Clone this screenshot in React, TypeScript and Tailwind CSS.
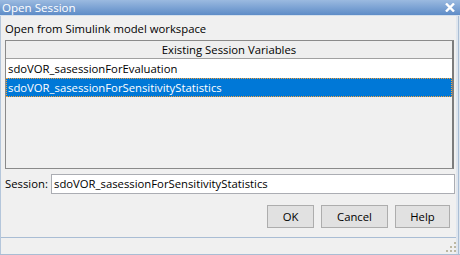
import React from "react";

const FONT = { fontFamily: '"Open Sans", "Noto Sans", sans-serif' };

function Grip() {
  const dots = [
    [8, 0],
    [4, 4],
    [8, 4],
    [0, 8],
    [4, 8],
    [8, 8],
  ];
  return (
    <svg width="10" height="10" viewBox="0 0 10 10">
      {dots.map(([x, y], i) => (
        <rect key={i} x={x} y={y} width="2" height="2" fill="#bdb8a3" />
      ))}
    </svg>
  );
}

export default function App() {
  return (
    <div
      className="w-[460px] h-[255px] bg-[#f0f0f0] flex flex-col text-[11.3px] text-black overflow-hidden"
      style={FONT}
    >
      {/* Title bar */}
      <div className="h-[15px] bg-gradient-to-b from-[#9bbae0] to-[#5e8cc7] flex items-center justify-between pl-[2px] pr-[5px]">
        <span className="text-white leading-[15px] text-[11.6px]">Open Session</span>
        <svg width="10" height="9" viewBox="0 0 10 9">
          <path d="M1 0.5 L9 8.5 M9 0.5 L1 8.5" stroke="white" strokeWidth="2.4" />
        </svg>
      </div>
      <div className="h-[1px] bg-[#d5e0ec]" />

      {/* Body */}
      <div className="flex-1 flex flex-col border-l border-l-[#b4c6db] border-r-[4px] border-r-[#dfe6ee] relative">
        <div className="absolute right-[-3px] top-0 bottom-0 w-[1px] bg-[#a9bdd4]" />
        <div className="h-[24px] pl-[4px] leading-[24px] pt-[1px]">Open from Simulink model workspace</div>

        {/* Table */}
        <div className="ml-[4px] mr-[2px] h-[129px] border border-[#8a8a8a] border-r-2 border-r-[#7c7c7c] bg-[#f0f0f0] flex flex-col">
          <div className="h-[18px] border-b border-[#a0a0a0] bg-[#eeeeee] flex items-center justify-center leading-[18px]">
            Existing Session Variables
          </div>
          <div className="h-[19px] bg-white pl-[2px] leading-[19px]">sdoVOR_sasessionForEvaluation</div>
          <div className="h-[19px] bg-[#0078d7] text-white pl-[1px] leading-[17px] border border-dotted border-[#f5a03a]">
            sdoVOR_sasessionForSensitivityStatistics
          </div>
        </div>

        {/* Session field */}
        <div className="mt-[5px] h-[20px] flex items-center pl-[4px] pr-[1px]">
          <span className="w-[46px]">Session:</span>
          <div className="flex-1 h-[20px] bg-white border border-[#abadb3] pl-[2px] leading-[18px]">
            sdoVOR_sasessionForSensitivityStatistics
          </div>
        </div>

        {/* Buttons */}
        <div className="mt-[11px] flex justify-end gap-[7px] pr-[6px]">
          <button className="w-[47px] h-[23px] bg-[#e1e1e1] border border-[#adadad] leading-[21px]">OK</button>
          <button className="w-[67px] h-[23px] bg-[#e1e1e1] border border-[#adadad] leading-[21px]">Cancel</button>
          <button className="w-[55px] h-[23px] bg-[#e1e1e1] border border-[#adadad] leading-[21px]">Help</button>
        </div>

        <div className="flex-1" />
        {/* Status bar */}
        <div className="h-[17px] border-t border-[#a9bdd4] flex justify-end items-end pb-[2px]">
          <Grip />
        </div>
      </div>
      <div className="h-[1px] bg-[#a9bdd4]" />
    </div>
  );
}
